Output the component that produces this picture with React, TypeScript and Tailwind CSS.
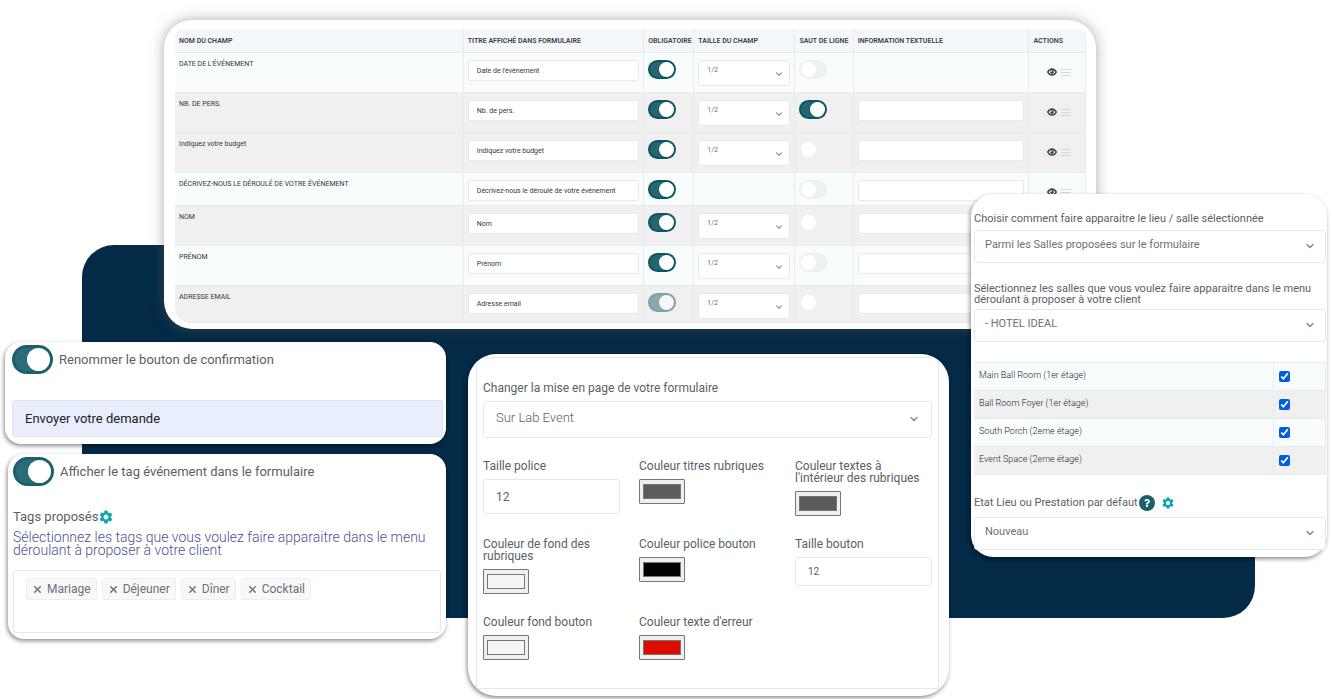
import { useId, useState } from "react";
import type { ReactNode } from "react";
import { ChevronDown, X } from "lucide-react";
import { MdSettings } from "react-icons/md";
import { FaQuestion } from "react-icons/fa";

type Field = {
  name: string;
  title: string;
  size: boolean;
  required: "on" | "locked";
  lineBreak: boolean;
  info: boolean;
  row: string;
};

const light = "bg-[#f8fcfd]";
const grey = "bg-[#f0f0f0]";

const fields: Field[] = [
  { name: "DATE DE L'ÉVÉNEMENT", title: "Date de l'événement", size: true, required: "on", lineBreak: false, info: false, row: `${light} h-10` },
  { name: "NB. DE PERS.", title: "Nb. de pers.", size: true, required: "on", lineBreak: true, info: true, row: `${grey} h-10` },
  { name: "Indiquez votre budget", title: "Indiquez votre budget", size: true, required: "on", lineBreak: false, info: true, row: `${grey} h-10` },
  { name: "DÉCRIVEZ-NOUS LE DÉROULÉ DE VOTRE ÉVÉNEMENT", title: "Décrivez-nous le déroulé de votre événement", size: false, required: "on", lineBreak: false, info: true, row: `${light} h-[33px]` },
  { name: "NOM", title: "Nom", size: true, required: "on", lineBreak: false, info: true, row: `${grey} h-10` },
  { name: "PRÉNOM", title: "Prénom", size: true, required: "on", lineBreak: false, info: true, row: `${light} h-10` },
  { name: "ADRESSE EMAIL", title: "Adresse email", size: true, required: "locked", lineBreak: false, info: true, row: `${grey} h-[37px]` },
];

const headings = [
  "NOM DU CHAMP",
  "TITRE AFFICHÉ DANS FORMULAIRE",
  "OBLIGATOIRE",
  "TAILLE DU CHAMP",
  "SAUT DE LIGNE",
  "INFORMATION TEXTUELLE",
  "ACTIONS",
];

function SmallSwitch({ label, on, disabled }: { label: string; on: boolean; disabled?: boolean }) {
  return (
    <input
      type="checkbox"
      role="switch"
      aria-label={label}
      defaultChecked={on}
      disabled={disabled}
      className="block h-[19px] w-7 appearance-none rounded-full border-2 border-[#edf1f4] bg-[#edf1f4] before:block before:size-[15px] before:rounded-full before:bg-white checked:border-[#0d5563] checked:bg-[#256570] checked:before:ml-[9px] disabled:opacity-50"
    />
  );
}

function BigSwitch({ id }: { id: string }) {
  return (
    <input
      id={id}
      type="checkbox"
      role="switch"
      defaultChecked
      className="block h-[29px] w-[41px] shrink-0 appearance-none rounded-full border-3 border-[#edf1f4] bg-[#edf1f4] before:block before:size-[23px] before:rounded-full before:bg-white checked:border-[#1c5f6d] checked:bg-[#2a6c78] checked:before:ml-3"
    />
  );
}

function Select({ id, label, value, className, iconClass }: { id?: string; label?: string; value: string; className: string; iconClass: string }) {
  return (
    <div className="relative">
      <select
        id={id}
        aria-label={label}
        defaultValue={value}
        className={`block w-full appearance-none rounded-[3px] border border-[#e6e8f0] bg-white ${className}`}
      >
        <option>{value}</option>
      </select>
      <ChevronDown className={`pointer-events-none absolute ${iconClass}`} strokeWidth={2.5} />
    </div>
  );
}

function Eye() {
  return (
    <svg viewBox="0 0 20 16" className="h-2 w-[10px]" aria-hidden="true">
      <path d="M1.500 8C3.500 3.800 6.500 1.800 10 1.800S16.500 3.800 18.500 8C16.500 12.200 13.500 14.200 10 14.200S3.500 12.200 1.500 8Z" fill="#fff" stroke="#3a4045" strokeWidth="3" />
      <circle cx="10" cy="8" r="3.800" fill="#3a4045" />
      <circle cx="8.400" cy="6.600" r="1.500" fill="#fff" />
    </svg>
  );
}

function FieldsTable() {
  return (
    <section className="col-start-4 col-end-9 row-start-1 mt-5 self-start overflow-hidden rounded-[28px] bg-white pt-[9px] pr-[10px] pb-[6px] pl-[11px] shadow-[0_0_14px_rgba(90,90,90,0.5)]">
      <table className="w-full table-fixed border-separate border-spacing-0 overflow-hidden rounded-tl-md rounded-tr-md rounded-bl-2xl text-left text-[#32373b]">
        <colgroup>
          <col className="w-[31.700%]" />
          <col className="w-[19.800%]" />
          <col className="w-[5.500%]" />
          <col className="w-[11.100%]" />
          <col className="w-[6.400%]" />
          <col className="w-[19.300%]" />
          <col className="w-[6.200%]" />
        </colgroup>
        <thead>
          <tr className="h-6 bg-[#f3f7fa]">
            {headings.map((h) => (
              <th key={h} className="border-r border-b border-[#e8ecee] px-1 pt-[2px] text-[7px] leading-none font-semibold whitespace-nowrap text-[#3c4146]">
                {h}
              </th>
            ))}
          </tr>
        </thead>
        <tbody className="[&_td]:border-r [&_td]:border-b [&_td]:border-[#e9ecee] [&_td]:px-1 [&_td]:align-top">
          {fields.map((f) => (
            <tr key={f.name} className={f.row}>
              <td className="pt-[7px] text-[7px] leading-[9px]">{f.name}</td>
              <td className="pt-[7px]">
                <input
                  aria-label={`Titre ${f.title}`}
                  defaultValue={f.title}
                  className="block h-[21px] w-full rounded-xs border border-[#e6eaec] bg-white px-2 text-[7px]"
                />
              </td>
              <td className="pt-[7px]">
                <SmallSwitch label={`${f.title} obligatoire`} on disabled={f.required === "locked"} />
              </td>
              <td className="pt-[7px]">
                {f.size && (
                  <Select label={`Taille ${f.title}`} value="1/2" className="h-[26px] px-2 pb-[5px] text-[7px] text-[#6b7074]" iconClass="right-[6px] top-[9px] size-[10px] text-[#6c7a70]" />
                )}
              </td>
              <td className="pt-[7px]">
                <SmallSwitch label={`Saut de ligne ${f.title}`} on={f.lineBreak} />
              </td>
              <td className="pt-[7px]">
                {f.info && (
                  <input aria-label={`Information ${f.title}`} className="block h-[21px] w-full rounded-xs border border-[#e6eaec] bg-white px-2 text-[7px]" />
                )}
              </td>
              <td className="pt-[15px]">
                <div className="flex items-center justify-center gap-1 pl-1">
                  <button type="button" aria-label={`Afficher ${f.title}`}>
                    <Eye />
                  </button>
                  <button type="button" aria-label={`Déplacer ${f.title}`} className="flex w-[10px] flex-col gap-[2px]">
                    <span className="h-px bg-[#d6d9da]" />
                    <span className="h-px bg-[#d6d9da]" />
                    <span className="h-px bg-[#d6d9da]" />
                  </button>
                </div>
              </td>
            </tr>
          ))}
        </tbody>
      </table>
    </section>
  );
}

const card = "bg-white shadow-[-1px_2px_4px_rgba(0,0,0,0.45)]";
const bigChevron = "size-3 text-[#7b7f9c]";

function LeftCards() {
  const [tags, setTags] = useState(["Mariage", "Déjeuner", "Dîner", "Cocktail"]);
  return (
    <div className="col-start-2 col-end-5 row-start-1 mt-[342px] flex flex-col gap-[10px] self-start text-[#5c6063]">
      <section className={`${card} rounded-2xl pt-[3px] pr-[3px] pb-[7px] pl-[7px]`}>
        <div className="flex items-center gap-[6px]">
          <BigSwitch id="rename" />
          <label htmlFor="rename" className="text-[13px]">Renommer le bouton de confirmation</label>
        </div>
        <input
          aria-label="Texte du bouton de confirmation"
          defaultValue="Envoyer votre demande"
          className="mt-[26px] block h-[37px] w-full rounded-[3px] border border-[#dfe5f2] bg-[#e8eefc] px-3 text-[13px] text-[#1d2126]"
        />
      </section>
      <section className={`${card} ml-[3px] rounded-2xl px-[5px] pt-[3px] pb-[6px]`}>
        <div className="flex items-center gap-[6px]">
          <BigSwitch id="show-tag" />
          <label htmlFor="show-tag" className="text-[13px]">Afficher le tag événement dans le formulaire</label>
        </div>
        <div className="mt-[23px] flex items-center">
          <h2 className="text-[13px] leading-4">Tags proposés</h2>
          <button type="button" aria-label="Configurer les tags" className="text-[#0ba5ae]">
            <MdSettings className="size-4" />
          </button>
        </div>
        <p className="mt-[6px] text-sm leading-[13px] font-light text-[#4c5192]">
          Sélectionnez les tags que vous voulez faire apparaitre dans le menu déroulant à proposer à votre client
        </p>
        <ul className="mt-[13px] flex min-h-[63px] flex-wrap content-start gap-[5px] rounded-[3px] border border-[#e4e6ef] px-3 py-[7px]">
          {tags.map((t) => (
            <li key={t} className="flex h-[22px] items-center gap-1 rounded-[3px] border border-[#eceef1] bg-[#f7f8fa] px-[5px] text-xs text-[#6c7074]">
              <button type="button" aria-label={`Retirer ${t}`} onClick={() => setTags(tags.filter((x) => x !== t))}>
                <X className="size-[11px]" strokeWidth={3} />
              </button>
              {t}
            </li>
          ))}
        </ul>
      </section>
    </div>
  );
}

function Setting({ label, children }: { label: string; children: (id: string) => ReactNode }) {
  const id = useId();
  return (
    <div>
      <label htmlFor={id} className="mb-[7px] block text-xs leading-3">
        {label}
      </label>
      {children(id)}
    </div>
  );
}

function ColorSetting({ label, color }: { label: string; color: string }) {
  return (
    <Setting label={label}>
      {(id) => (
        <input
          id={id}
          type="color"
          defaultValue={color}
          className="block h-[25px] w-[46px] appearance-none rounded-[1px] border border-[#767676] bg-[#efefef] [&::-webkit-color-swatch]:rounded-none [&::-webkit-color-swatch]:border [&::-webkit-color-swatch]:border-[#777777] [&::-webkit-color-swatch-wrapper]:px-[3px] [&::-webkit-color-swatch-wrapper]:py-1"
        />
      )}
    </Setting>
  );
}

function LayoutCard() {
  return (
    <section className={`${card} col-start-6 col-end-7 row-start-1 mt-[354px] mb-[3px] self-start overflow-hidden rounded-[28px] pt-[3px] pr-[10px] pb-[7px] pl-2 text-[#5c6063]`}>
      <div className="border border-[#e6e8f0] px-[6px] pt-6 pb-[28px]">
        <label htmlFor="layout" className="mb-[7px] block text-xs leading-3">
          Changer la mise en page de votre formulaire
        </label>
        <Select id="layout" value="Sur Lab Event" className="h-[37px] px-3 pb-1 text-[13px] font-light" iconClass={`right-3 top-3 ${bigChevron}`} />
        <div className="mt-[22px] grid grid-cols-3 gap-x-[19px] gap-y-[22px]">
          <Setting label="Taille police">
            {(id) => <input id={id} defaultValue="12" className="block h-[35px] w-full rounded-[3px] border border-[#e6e8f0] px-3 text-xs" />}
          </Setting>
          <ColorSetting label="Couleur titres rubriques" color="#5b5b5b" />
          <ColorSetting label="Couleur textes à l'intérieur des rubriques" color="#5b5b5b" />
          <ColorSetting label="Couleur de fond des rubriques" color="#f5f5f5" />
          <ColorSetting label="Couleur police bouton" color="#000000" />
          <Setting label="Taille bouton">
            {(id) => <input id={id} defaultValue="12" className="block h-[29px] w-full rounded-[3px] border border-[#e6e8f0] px-3 text-[10px]" />}
          </Setting>
          <ColorSetting label="Couleur fond bouton" color="#f5f5f5" />
          <ColorSetting label="Couleur texte d'erreur" color="#de0b00" />
        </div>
      </div>
    </section>
  );
}

const rooms = ["Main Ball Room (1er étage)", "Ball Room Foyer (1er étage)", "South Porch (2eme étage)", "Event Space (2eme étage)"];
const venueSelect = "h-[33px] px-[10px] pb-[2px] text-[11px] text-[#6c7074]";

function VenueCard() {
  return (
    <section className={`${card} col-start-8 col-end-11 row-start-1 mt-[194px] self-start rounded-[22px] pt-[18px] pr-px pb-[7px] pl-[3px] text-[#5c6063]`}>
      <label htmlFor="display" className="mb-1 block text-[11px] leading-[14px]">
        Choisir comment faire apparaitre le lieu / salle sélectionnée
      </label>
      <Select id="display" value="Parmi les Salles proposées sur le formulaire" className={venueSelect} iconClass={`right-[10px] top-[10px] ${bigChevron}`} />
      <label htmlFor="venue" className="mt-5 mb-1 block text-[11px] leading-[11px]">
        Sélectionnez les salles que vous voulez faire apparaitre dans le menu déroulant à proposer à votre client
      </label>
      <Select id="venue" value="- HOTEL IDEAL" className={venueSelect} iconClass={`right-[10px] top-[10px] ${bigChevron}`} />
      <table className="mt-5 w-full border-separate border-spacing-0 border-t border-[#e9ecee] text-[#202428]">
        <tbody>
          {rooms.map((r, i) => (
            <tr key={r} className="h-7 odd:bg-[#f8fcfd] even:bg-[#f0f0f0]">
              <td className="border-r border-b border-[#e9ecee] px-[5px] pb-[2px] text-[9px] font-light">
                <label htmlFor={`room-${i}`}>{r}</label>
              </td>
              <td className="w-[52px] border-r border-b border-[#e9ecee] px-[5px]">
                <input id={`room-${i}`} type="checkbox" defaultChecked className="block size-[11px] accent-[#0060df]" />
              </td>
            </tr>
          ))}
        </tbody>
      </table>
      <div className="mt-5 mb-[5px] flex items-center">
        <label htmlFor="state" className="text-[11px]">Etat Lieu ou Prestation par défaut</label>
        <button type="button" aria-label="Aide" className="ml-px flex size-4 items-center justify-center rounded-full bg-[#1c5f6d] text-white">
          <FaQuestion className="size-2" />
        </button>
        <button type="button" aria-label="Configurer" className="ml-[6px] text-[#0ba5ae]">
          <MdSettings className="size-[14px]" />
        </button>
      </div>
      <Select id="state" value="Nouveau" className={venueSelect} iconClass={`right-[10px] top-[10px] ${bigChevron}`} />
    </section>
  );
}

export default function App() {
  return (
    <main className="grid grid-cols-[minmax(0,5fr)_minmax(0,77fr)_minmax(0,82fr)_minmax(0,282fr)_minmax(0,22fr)_minmax(0,481fr)_minmax(0,22fr)_minmax(0,125fr)_minmax(0,159fr)_minmax(0,72fr)_minmax(0,5fr)] bg-white font-[Roboto,sans-serif]">
      <div className="col-start-3 col-end-10 row-start-1 mt-[245px] h-[373px] self-start rounded-tl-[32px] rounded-br-[32px] bg-[#032a46]" />
      <FieldsTable />
      <LeftCards />
      <LayoutCard />
      <VenueCard />
    </main>
  );
}
